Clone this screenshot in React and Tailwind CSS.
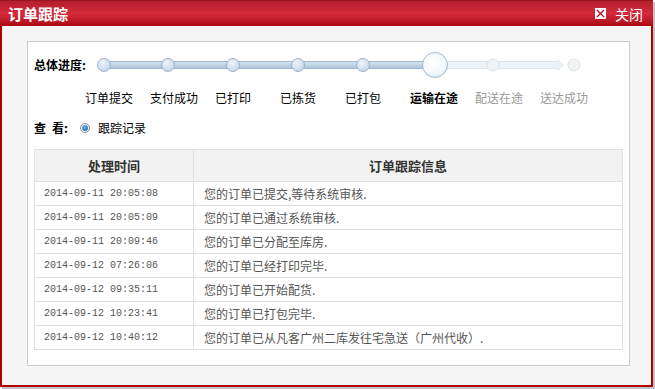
import React from "react";

const steps = [
  { label: "订单提交", state: "done" },
  { label: "支付成功", state: "done" },
  { label: "已打印", state: "done" },
  { label: "已拣货", state: "done" },
  { label: "已打包", state: "done" },
  { label: "运输在途", state: "current" },
  { label: "配送在途", state: "todo" },
  { label: "送达成功", state: "todo" },
];

const logs = [
  ["2014-09-11 20:05:08", "您的订单已提交,等待系统审核."],
  ["2014-09-11 20:05:09", "您的订单已通过系统审核."],
  ["2014-09-11 20:09:46", "您的订单已分配至库房."],
  ["2014-09-12 07:26:06", "您的订单已经打印完毕."],
  ["2014-09-12 09:35:11", "您的订单已开始配货."],
  ["2014-09-12 10:23:41", "您的订单已打包完毕."],
  ["2014-09-12 10:40:12", "您的订单已从凡客广州二库发往宅急送（广州代收）."],
];

function ProgressTrack() {
  const done = [8, 72, 137, 202, 267];
  return (
    <svg width="490" height="28" viewBox="0 0 490 28">
      <defs>
        <linearGradient id="bar" x1="0" y1="0" x2="0" y2="1">
          <stop offset="0" stopColor="#dbe6f1" />
          <stop offset="0.5" stopColor="#c3d5e6" />
          <stop offset="1" stopColor="#a9c1d8" />
        </linearGradient>
        <radialGradient id="dot" cx="0.4" cy="0.35" r="0.7">
          <stop offset="0" stopColor="#eef4fa" />
          <stop offset="1" stopColor="#c3d5e7" />
        </radialGradient>
        <radialGradient id="big" cx="0.45" cy="0.4" r="0.65">
          <stop offset="0" stopColor="#ffffff" />
          <stop offset="0.7" stopColor="#f3f7fb" />
          <stop offset="1" stopColor="#d5e2ee" />
        </radialGradient>
      </defs>
      {/* todo track with arrow */}
      <path
        d="M339 10.5 H460 L462 9 L467 14 L462 19 L460 17.5 H339 Z"
        fill="#edf2f6"
        stroke="#dbe3eb"
      />
      <circle cx="397" cy="14" r="6" fill="#f1f4f7" stroke="#dbe2ea" />
      <circle cx="478" cy="14" r="6" fill="#f1f3f6" stroke="#dde2e8" />
      {/* done track */}
      <rect x="8" y="10.5" width="331" height="7" rx="2" fill="url(#bar)" stroke="#9fb7ce" />
      {done.map((x) => (
        <circle key={x} cx={x} cy="14" r="6.5" fill="url(#dot)" stroke="#9db5cd" />
      ))}
      <circle cx="339" cy="14" r="12.5" fill="url(#big)" stroke="#a6bdd3" />
    </svg>
  );
}

export default function App() {
  return (
    <div className="w-[655px] h-[389px] bg-white font-['Noto_Sans_CJK_SC',sans-serif]">
      <div className="w-[653px] h-[387px] flex flex-col shadow-[2px_2px_0_#c4c4c4]">
        <div className="h-[26px] flex items-center justify-between px-[8px] bg-gradient-to-b from-[#b41f2d] via-[#d42a3b] to-[#ac0512] border-t border-[#9c1622]">
          <span className="text-white text-[15px] font-bold leading-none">订单跟踪</span>
          <div className="flex items-center gap-[9px] pr-[2px]">
            <svg width="11" height="11" viewBox="0 0 11 11">
              <rect x="0.5" y="0.5" width="10" height="10" fill="#fff" stroke="#fff" />
              <path d="M2 2 L9 9 M9 2 L2 9" stroke="#b3101d" strokeWidth="1.3" />
            </svg>
            <span className="text-white text-[14px] leading-none">关闭</span>
          </div>
        </div>

        <div className="flex-1 bg-[#f5f5f5] border-x-2 border-b-2 border-[#b00000] pt-[15px] pl-[25px]">
          <div className="w-[603px] h-[325px] bg-white border border-[#cccccc]">
            <div className="flex items-center mt-[9px] pl-[6px] h-[28px]">
              <span className="w-[62px] text-[12px] font-bold text-black">总体进度:</span>
              <ProgressTrack />
            </div>

            <div className="flex pl-[57px] mt-[11px] h-[16px] items-center">
              {steps.map((s) => (
                <div
                  key={s.label}
                  className={`w-[65px] text-[12px] leading-none ${
                    s.state === "current"
                      ? "font-bold text-black"
                      : s.state === "todo"
                      ? "text-[#999999]"
                      : "text-black"
                  }`}
                >
                  {s.label}
                </div>
              ))}
            </div>

            <div className="flex items-center pl-[6px] mt-[14px] h-[16px] text-[12px]">
              <span className="font-bold text-black">查</span>
              <span className="font-bold text-black ml-[6px]">看:</span>
              <span className="ml-[12px] w-[10px] h-[10px] rounded-full border border-[#8c8c8c] bg-white flex items-center justify-center">
                <span className="w-[6px] h-[6px] rounded-full bg-[radial-gradient(circle_at_40%_35%,#6fb5ee,#0b5aa8)]" />
              </span>
              <span className="ml-[8px] text-black">跟踪记录</span>
            </div>

            <table className="ml-[6px] mt-[13px] w-[589px] border-collapse text-[12px]">
              <thead>
                <tr className="h-[32px] bg-[#f2f2f2]">
                  <th className="w-[159px] border border-[#e0e0e0] text-[13px] font-bold text-[#333333] text-center">处理时间</th>
                  <th className="border border-[#e0e0e0] text-[13px] font-bold text-[#333333] text-center">订单跟踪信息</th>
                </tr>
              </thead>
              <tbody>
                {logs.map(([t, msg]) => (
                  <tr key={t} className="h-[24px]">
                    <td className="border border-[#e0e0e0] pl-[9px] font-['Liberation_Mono',monospace] text-[10px] text-[#555555]">{t}</td>
                    <td className="border border-[#e0e0e0] pl-[10px] text-[#555555]">{msg}</td>
                  </tr>
                ))}
              </tbody>
            </table>
          </div>
        </div>
      </div>
    </div>
  );
}
